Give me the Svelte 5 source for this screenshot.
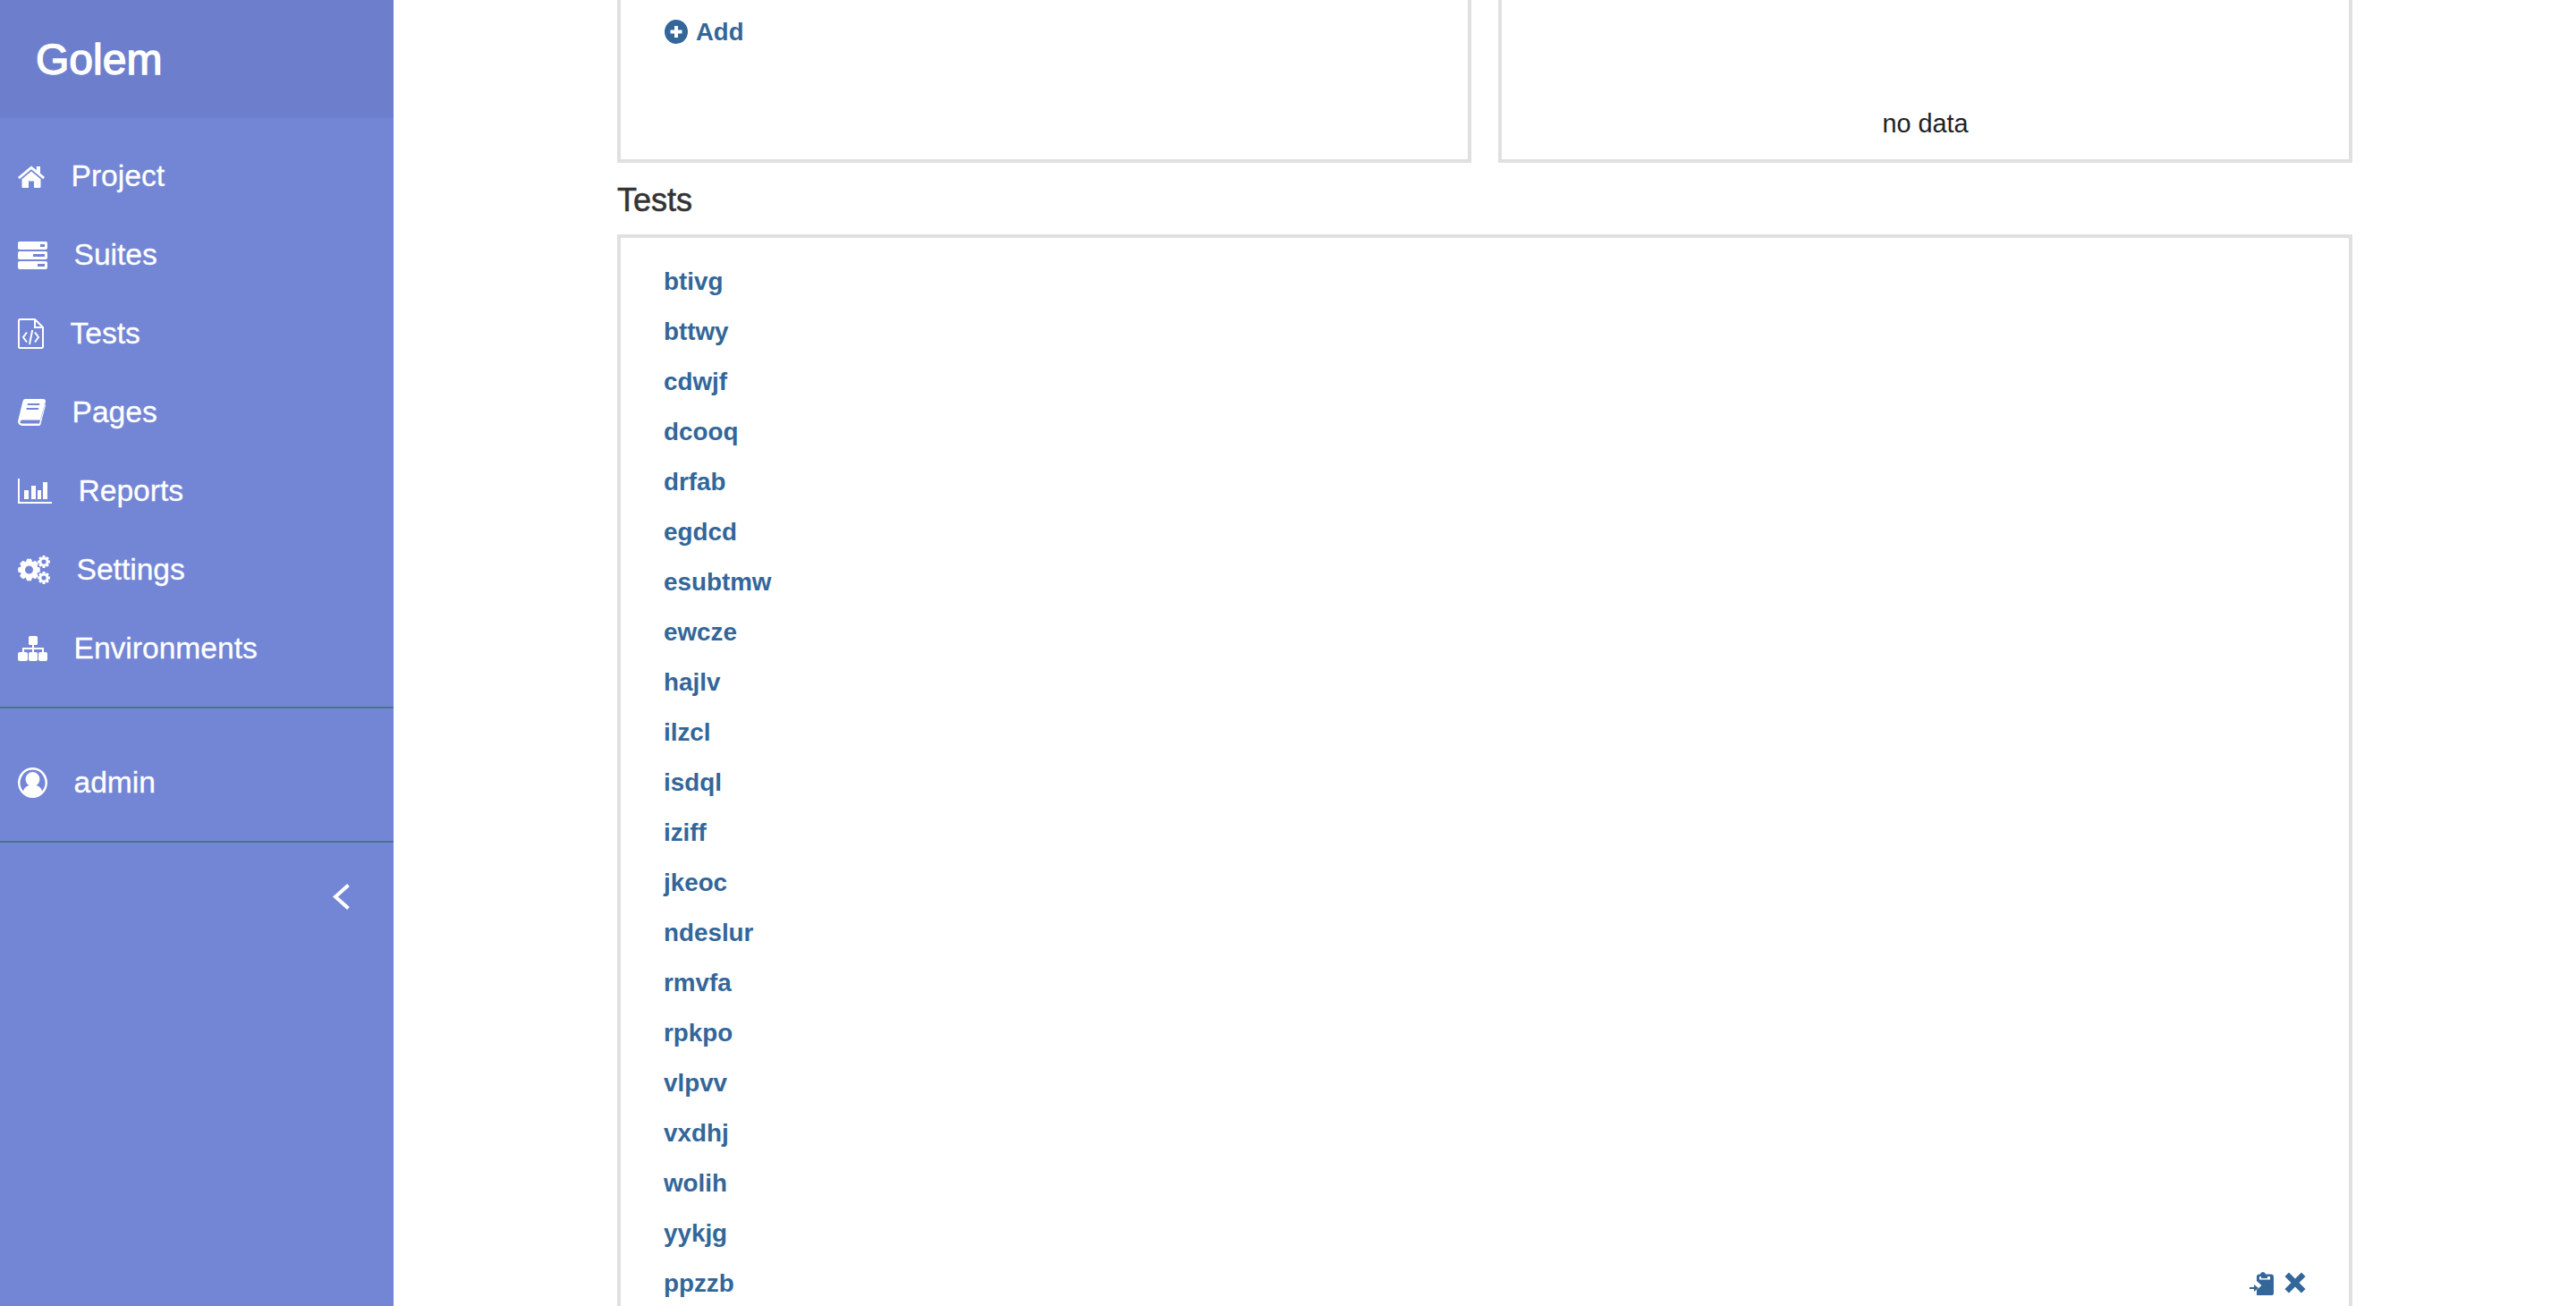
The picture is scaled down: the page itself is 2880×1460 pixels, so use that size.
<script>
    const navItems = [
        { label: 'Project', icon: 'home', width: 30, height: 25 },
        { label: 'Suites', icon: 'server', width: 33, height: 31 },
        { label: 'Tests', icon: 'file', width: 29, height: 34 },
        { label: 'Pages', icon: 'book', width: 31, height: 30 },
        { label: 'Reports', icon: 'chart', width: 38, height: 28 },
        { label: 'Settings', icon: 'cogs', width: 36, height: 32 },
        { label: 'Environments', icon: 'sitemap', width: 33, height: 28 }
    ];

    const tests = [
        'btivg', 'bttwy', 'cdwjf', 'dcooq', 'drfab', 'egdcd', 'esubtmw', 'ewcze', 'hajlv', 'ilzcl', 'isdql',
        'iziff', 'jkeoc', 'ndeslur', 'rmvfa', 'rpkpo', 'vlpvv', 'vxdhj', 'wolih', 'yykjg', 'ppzzb'
    ];

    // builds a cog outline with a round hole in the middle
    function gear(cx, cy, outer, inner, hole, teeth) {
        let d = '';
        const step = (Math.PI * 2) / teeth;
        for (let i = 0; i < teeth; i++) {
            const a = i * step;
            const pts = [
                [inner, a - step * 0.5],
                [outer, a - step * 0.24],
                [outer, a + step * 0.24],
                [inner, a + step * 0.5]
            ];
            for (const [r, t] of pts) {
                d += `${d ? 'L' : 'M'}${(cx + r * Math.cos(t)).toFixed(2)} ${(cy + r * Math.sin(t)).toFixed(2)}`;
            }
        }
        d += `ZM${cx - hole} ${cy}a${hole} ${hole} 0 1 0 ${hole * 2} 0a${hole} ${hole} 0 1 0 ${-hole * 2} 0Z`;
        return d;
    }

    const cogs = gear(12.5, 16, 12.5, 9.5, 4.5, 8) + gear(29, 7, 7, 5, 2.6, 8) + gear(29, 25, 7, 5, 2.6, 8);
</script>

{#snippet navIcon(item)}
    <svg class="nav-icon" width={item.width} height={item.height} viewBox="0 0 {item.width} {item.height}">
        {#if item.icon === 'home'}
            <path d="M15 0.500 L0 13 L1.800 15.300 L15 4.300 L28.200 15.300 L30 13 L25 8.800 V1 H20.800 V5.300z" />
            <path d="M15 6.500 L4.500 15.300 V24 a1 1 0 0 0 1 1 H12 V17.500 H18 V25 H24.500 a1 1 0 0 0 1-1 V15.300z" />
        {:else if item.icon === 'server'}
            <path fill-rule="evenodd" d="M2 0 H31 a2 2 0 0 1 2 2 V7 a2 2 0 0 1-2 2 H2 a2 2 0 0 1-2-2 V2 a2 2 0 0 1 2-2z M25 3 V6 H30 V3z" />
            <path fill-rule="evenodd" d="M2 11 H31 a2 2 0 0 1 2 2 V18 a2 2 0 0 1-2 2 H2 a2 2 0 0 1-2-2 V13 a2 2 0 0 1 2-2z M17 14 V17 H30 V14z" />
            <path fill-rule="evenodd" d="M2 22 H31 a2 2 0 0 1 2 2 V29 a2 2 0 0 1-2 2 H2 a2 2 0 0 1-2-2 V24 a2 2 0 0 1 2-2z M22 25 V28 H30 V25z" />
        {:else if item.icon === 'file'}
            <g class="line">
                <path d="M2.500 1 H19 L28 10 V31.500 a1.500 1.500 0 0 1-1.500 1.500 H2.500 a1.500 1.500 0 0 1-1.500-1.500 V2.500 a1.500 1.500 0 0 1 1.500-1.500z" />
                <path d="M19 1 V10 H28" />
                <path d="M10 15.500 L6 21 L10 26.500 M19 15.500 L23 21 L19 26.500 M16.200 13 L13 29" />
            </g>
        {:else if item.icon === 'book'}
            <path fill-rule="evenodd" d="M8 0 H28 a3 3 0 0 1 3 3 L26 22 a2 2 0 0 1-2 1.500 H5 a2.500 2.500 0 0 0-2.500 2 a2 2 0 0 0 2 2 H24 L30 6 L31 7 L25.500 28 a2 2 0 0 1-2 2 H5 a5 5 0 0 1-5-5 L5.500 2.500 a3 3 0 0 1 2.500-2.500z M11 5 L10.500 7 H24 L24.500 5z M9.800 10 L9.300 12 H22.800 L23.300 10z" />
        {:else if item.icon === 'chart'}
            <path d="M0 0 H2 V26 H38 V28 H0z" />
            <rect x="7" y="13" width="5" height="10" />
            <rect x="15" y="8" width="5" height="15" />
            <rect x="22" y="13" width="4" height="10" />
            <rect x="28" y="4" width="5" height="19" />
        {:else if item.icon === 'cogs'}
            <path fill-rule="evenodd" d={cogs} />
        {:else if item.icon === 'sitemap'}
            <rect x="12" y="0" width="10" height="10" rx="1.500" />
            <path d="M16 10 H18 V13 H29 V19 H27 V15 H18 V19 H16 V15 H7 V19 H5 V13 H16z" />
            <rect x="0" y="18" width="11" height="10" rx="2" />
            <rect x="12" y="18" width="10" height="10" rx="2" />
            <rect x="23" y="18" width="10" height="10" rx="2" />
        {/if}
    </svg>
{/snippet}

<!--
========================================================================================================================
    //region HTML
========================================================================================================================
-->

<div class="page">
    <aside class="sidebar">
        <div class="sidebar-header">Golem</div>

        <ul class="nav">
            {#each navItems as item}
                <li>
                    {@render navIcon(item)}
                    <span>{item.label}</span>
                </li>
            {/each}
        </ul>

        <div class="user">
            <svg class="nav-icon" width="33" height="34" viewBox="0 0 33 34">
                <path fill-rule="evenodd" d="M16.500 0 a16.500 17 0 1 1 0 34 a16.500 17 0 1 1 0-34z M16.500 2.500 a14 14.500 0 0 0-10.500 24 c1-4 4-6 6.500-6.500 a8 8 0 1 1 8 0 c2.500 .5 5.500 2.500 6.500 6.500 a14 14.500 0 0 0-10.500-24z" />
            </svg>
            <span>admin</span>
        </div>

        <div class="collapse">
            <svg width="19" height="29" viewBox="0 0 19 29">
                <path d="M17.500 1.500 L3 14.500 L17.500 27.500" />
            </svg>
        </div>
    </aside>

    <main class="content">
        <div class="top-cards">
            <div class="card card-add">
                <div class="link add">
                    <svg width="26" height="27" viewBox="0 0 26 27">
                        <path fill-rule="evenodd" d="M13 0 a13 13.500 0 1 1 0 27 a13 13.500 0 1 1 0-27z M11 7 V11.500 H6.500 V15.500 H11 V20 H15 V15.500 H19.500 V11.500 H15 V7z" />
                    </svg>
                    Add
                </div>
            </div>
            <div class="card card-nodata">no data</div>
        </div>

        <h3 class="title">Tests</h3>

        <div class="card card-tests">
            {#each tests as test, i}
                <div class="test-row">
                    <span class="link">{test}</span>
                    {#if i === tests.length - 1}
                        <span class="row-actions">
                            <svg width="27" height="26" viewBox="0 0 27 26">
                                <path d="M15 0 a3 3 0 0 1 3 2.500 H24 a3 3 0 0 1 3 3 V24 a2 2 0 0 1-2 2 H8 V20 L13.500 15 L8 10 V5.500 a3 3 0 0 1 3-3 H12 a3 3 0 0 1 3-2.500z M11 5 V8.500 H23 V5 H20 V7 H13 V5z" fill-rule="evenodd" />
                                <path d="M0 17 H5 V14 L10 18 L5 22 V19 H0z" />
                            </svg>
                            <svg width="24" height="24" viewBox="0 0 24 24">
                                <path d="M5 0.500 L12 7.500 L19 0.500 L23.500 5 L16.500 12 L23.500 19 L19 23.500 L12 16.500 L5 23.500 L0.500 19 L7.500 12 L0.500 5z" />
                            </svg>
                        </span>
                    {/if}
                </div>
            {/each}
        </div>
    </main>
</div>

<!--
========================================================================================================================
    //region CSS
========================================================================================================================
-->

<style>
    :global(body) {
        background: #fff;
        font-family: "Liberation Sans", Arial, sans-serif;
    }

    .page {
        display: flex;
        height: 1460px;
        overflow: hidden;
    }

    .sidebar {
        width: 440px;
        flex-shrink: 0;
        background: #7386d5;
        color: #fff;
    }

    .sidebar-header {
        height: 132px;
        box-sizing: border-box;
        padding-left: 40px;
        background: #6d7fcc;
        font-size: 48px;
        -webkit-text-stroke: 1.400px #fff;
        line-height: 134px;
    }

    .nav {
        list-style: none;
        margin: 0;
        padding: 21px 0;
        border-bottom: 2px solid #47748b;
    }

    .nav li,
    .user {
        display: flex;
        align-items: center;
        gap: 29.500px;
        height: 88px;
        padding-left: 20px;
        font-size: 33.600px;
        -webkit-text-stroke: 0.3px #fff;
    }

    .nav-icon {
        fill: #fff;
        flex-shrink: 0;
    }

    .line {
        fill: none;
        stroke: #fff;
        stroke-width: 2;
    }

    .user {
        box-sizing: border-box;
        height: 150px;
        padding-top: 18px;
        border-bottom: 2px solid #47748b;
    }

    .collapse {
        display: flex;
        justify-content: flex-end;
        padding: 46px 49px 0 0;
    }

    .collapse path {
        fill: none;
        stroke: #fff;
        stroke-width: 4;
    }

    .content {
        flex: 1;
        padding: 0 250px;
        color: #333;
    }

    .top-cards {
        display: grid;
        grid-template-columns: 1fr 1fr;
        gap: 30px;
        height: 182px;
    }

    .card {
        box-sizing: border-box;
        border: 4px solid #e0e0e0;
    }

    .card-add {
        border-top: none;
        padding: 22px 0 0 49px;
    }

    .card-nodata {
        border-top: none;
        display: flex;
        align-items: flex-end;
        justify-content: center;
        padding-bottom: 23px;
        font-size: 28.800px;
        color: #222;
    }

    .link {
        color: #336699;
        font-size: 27.800px;
        font-weight: 700;
    }

    .add {
        display: flex;
        align-items: center;
        gap: 9px;
        line-height: 27px;
        font-size: 27.500px;
    }

    .add svg,
    .row-actions svg {
        fill: #336699;
    }

    .title {
        margin: 0;
        height: 80px;
        font-size: 36px;
        font-weight: 400;
        -webkit-text-stroke: 0.6px #333;
        line-height: 83px;
    }

    .card-tests {
        padding: 21px 48px 0;
        height: 1300px;
    }

    .test-row {
        display: flex;
        align-items: center;
        justify-content: space-between;
        height: 56px;
    }

    .row-actions {
        display: flex;
        gap: 12px;
    }
</style>
